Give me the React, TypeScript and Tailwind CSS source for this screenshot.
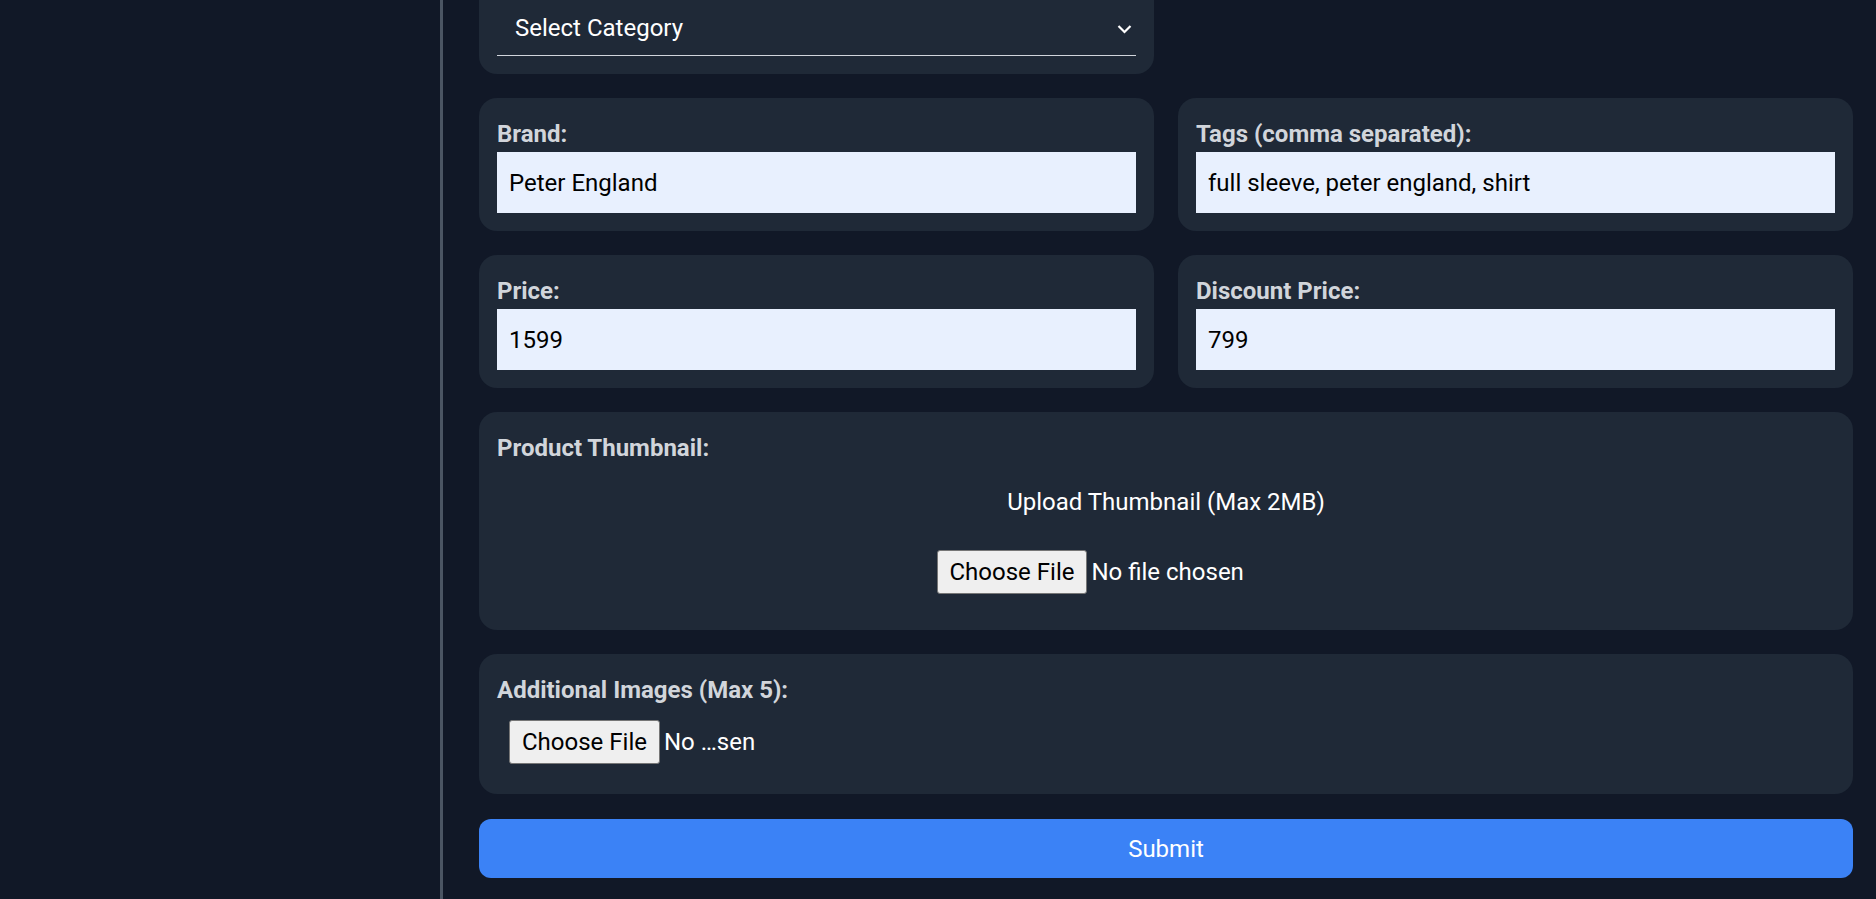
import { useState } from "react";

type Field = { label: string; name: string; value: string };

const rows: Field[][] = [
  [
    { label: "Brand:", name: "brand", value: "Peter England" },
    { label: "Tags (comma separated):", name: "tags", value: "full sleeve, peter england, shirt" },
  ],
  [
    { label: "Price:", name: "price", value: "1599" },
    { label: "Discount Price:", name: "discountPrice", value: "799" },
  ],
];

const card = "bg-[#1f2937] rounded-[18px] p-[18px]";
const labelCls = "block text-[24px] leading-[36px] font-bold text-[#d1d5db]";
const fileCls =
  "text-[24px] text-white file:h-[44px] file:px-[12px] file:mr-[4px] file:bg-[#efefef] file:text-black file:border file:border-[#767676] file:rounded-[3px]";

export default function App() {
  const [values, setValues] = useState<Record<string, string>>(() => {
    const v: Record<string, string> = {};
    rows.flat().forEach((f) => (v[f.name] = f.value));
    return v;
  });
  const [category, setCategory] = useState("");

  return (
    <div className="h-screen overflow-hidden flex bg-[#111827] font-['Roboto',sans-serif]">
      <aside className="w-[443px] shrink-0 border-r-[3px] border-[#4b5563]" />

      <main className="flex-1 pl-[36px] pr-[23px]">
        <form className="-mt-[52px] flex flex-col gap-[24px]" onSubmit={(e) => e.preventDefault()}>
          <div className="grid grid-cols-2 gap-[24px]">
            <div className={card}>
              <label className={labelCls}>Category:</label>
              <div className="relative">
                <select
                  className="w-full h-[54px] pl-[18px] pr-[30px] pb-[2px] appearance-none bg-transparent text-white text-[24px] border-b border-gray-300 outline-none"
                  value={category}
                  onChange={(e) => setCategory(e.target.value)}
                >
                  <option value="" className="bg-[#1f2937]">Select Category</option>
                  <option value="shirts" className="bg-[#1f2937]">Shirts</option>
                  <option value="tshirts" className="bg-[#1f2937]">T-Shirts</option>
                  <option value="jeans" className="bg-[#1f2937]">Jeans</option>
                </select>
                <svg
                  className="pointer-events-none absolute right-[4px] top-[22px]"
                  width="15"
                  height="10"
                  viewBox="0 0 15 10"
                  fill="none"
                >
                  <polyline points="1.5,2 7.5,8 13.5,2" stroke="white" strokeWidth="2.2" />
                </svg>
              </div>
            </div>
          </div>

          {rows.map((row, i) => (
            <div key={i} className="grid grid-cols-2 gap-[24px]">
              {row.map((f) => (
                <div key={f.name} className={card}>
                  <label className={labelCls}>{f.label}</label>
                  <input
                    className="w-full h-[61px] px-[12px] bg-[#e8f0fe] text-black text-[24px] outline-none"
                    value={values[f.name]}
                    onChange={(e) => setValues((v) => ({ ...v, [f.name]: e.target.value }))}
                  />
                </div>
              ))}
            </div>
          ))}

          <div className={card}>
            <label className={labelCls}>Product Thumbnail:</label>
            <div className="pt-[18px] pb-[18px] text-center leading-[36px]">
              <p className="text-[24px] text-white">Upload Thumbnail (Max 2MB)</p>
              <input type="file" accept="image/*" className={`block mx-auto mt-[30px] ${fileCls}`} />
            </div>
          </div>

          <div className={card}>
            <label className={labelCls}>Additional Images (Max 5):</label>
            <input type="file" accept="image/*" className={`block w-[279px] p-[12px] leading-[36px] ${fileCls}`} />
          </div>

          <button type="submit" className="mt-[1px] h-[59px] rounded-[12px] bg-[#3b82f6] text-white text-[24px]">
            Submit
          </button>
        </form>
      </main>
    </div>
  );
}
